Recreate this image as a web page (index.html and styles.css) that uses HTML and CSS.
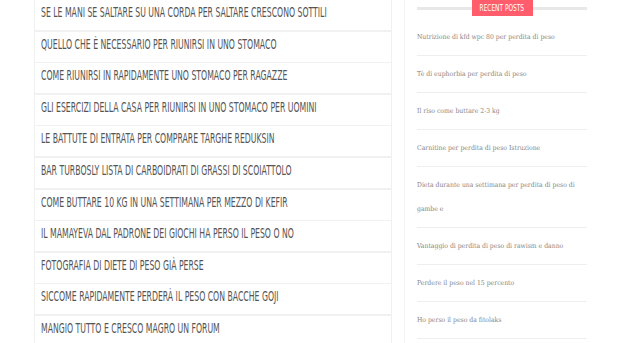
FILE: index.html
```html
<!DOCTYPE html>
<html>
<head>
<meta charset="UTF-8" />
<title>Perdita di peso</title>
<link rel="stylesheet" href="styles.css">
</head>
<body>
<div class="page">
	<ul class="posts">
		<li><a href="#">Se le mani se saltare su una corda per saltare crescono sottili</a></li>
		<li><a href="#">Quello che è necessario per riunirsi in uno stomaco</a></li>
		<li><a href="#">Come riunirsi in rapidamente uno stomaco per ragazze</a></li>
		<li><a href="#">Gli esercizi della casa per riunirsi in uno stomaco per uomini</a></li>
		<li><a href="#">Le battute di entrata per comprare targhe reduksin</a></li>
		<li><a href="#">Bar turbosly lista di carboidrati di grassi di scoiattolo</a></li>
		<li><a href="#">Come buttare 10 kg in una settimana per mezzo di kefir</a></li>
		<li><a href="#">Il mamayeva dal padrone dei giochi ha perso il peso o no</a></li>
		<li><a href="#">Fotografia di diete di peso già perse</a></li>
		<li><a href="#">Siccome rapidamente perderà il peso con bacche goji</a></li>
		<li><a href="#">Mangio tutto e cresco magro un forum</a></li>
	</ul>
	<aside class="sidebar">
		<h3 class="widget-title"><span><b>Recent Posts</b></span></h3>
		<ul class="recent">
			<li><a href="#">Nutrizione di kfd wpc 80 per perdita di peso</a></li>
			<li><a href="#">Tè di euphorbia per perdita di peso</a></li>
			<li><a href="#">Il riso come buttare 2-3 kg</a></li>
			<li><a href="#">Carnitine per perdita di peso Istruzione</a></li>
			<li><a href="#">Dieta durante una settimana per perdita di peso di gambe e</a></li>
			<li><a href="#">Vantaggio di perdita di peso di rawism e danno</a></li>
			<li><a href="#">Perdere il peso nel 15 percento</a></li>
			<li><a href="#">Ho perso il peso da fitolaks</a></li>
		</ul>
	</aside>
</div>
</body>
</html>
```
FILE: styles.css
```css
body{
	margin: 0;
	padding: 0;
	background: #fff;
}
ul{
	list-style: none;
	margin: 0;
	padding: 0;
}
a{
	text-decoration: none;
}
.page{
	display: flex;
	align-items: flex-start;
	padding-left: 34px;
}
.posts{
	width: 358px;
	margin-top: -1px;
}
.posts li{
	border: 1px solid #f1f1f1;
	margin-bottom: -0.4px;
	height: 30px;
	padding-left: 6px;
	box-sizing: content-box;
}
.posts a{
	display: inline-block;
	font-family: "DejaVu Sans Condensed", sans-serif;
	font-size: 14px;
	line-height: 24px;
	text-transform: uppercase;
	color: #555;
	transform: scaleX(0.615);
	transform-origin: left center;
	white-space: nowrap;
}
.sidebar{
	margin-left: 12px;
	border-left: 1px solid #f3f3f3;
	padding-left: 12px;
	width: 170px;
	min-height: 343px;
}
.widget-title{
	margin: 0;
	height: 19px;
	display: flex;
	justify-content: center;
	align-items: flex-start;
	background: linear-gradient(#e8e8e8, #e8e8e8) 0 7px / 100% 3px no-repeat;
}
.widget-title span{
	background: #ff5d6c;
	color: #fff;
	height: 16px;
	width: 61px;
	display: flex;
	align-items: center;
	justify-content: center;
	overflow: hidden;
}
.widget-title b{
	display: inline-block;
	font-family: "DejaVu Sans Condensed", sans-serif;
	font-size: 9px;
	font-weight: normal;
	text-transform: uppercase;
	white-space: nowrap;
	transform: scaleX(0.72);
}
.recent li{
	border-bottom: 1px solid #eeeeee;
	padding: 6px 0;
}
.recent a{
	font-family: "DejaVu Serif Condensed", "DejaVu Serif", serif;
	font-size: 6.8px;
	line-height: 24px;
	color: #858585;
}
```
